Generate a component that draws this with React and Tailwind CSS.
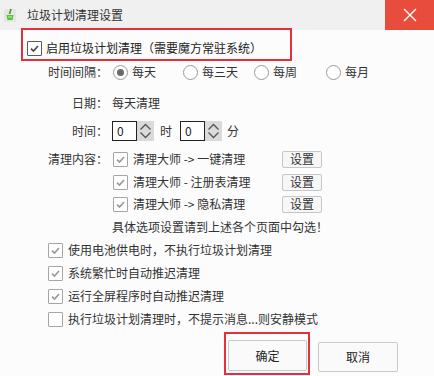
import React from "react";

const font = { fontFamily: '"Noto Sans CJK SC", "Noto Sans", sans-serif' };

function Check({ checked = true, dark = false }) {
  return (
    <div
      className={`w-[15px] h-[15px] shrink-0 border-[1.5px] rounded-[1px] bg-white flex items-center justify-center ${
        dark ? "border-[#5a5a5a]" : "border-[#a5a5a5]"
      }`}
    >
      {checked && (
        <svg width="11" height="11" viewBox="0 0 11 11">
          <path
            d="M2 5.6 L4.5 8 L9 3"
            fill="none"
            stroke={dark ? "#4a4a4a" : "#9a9a9a"}
            strokeWidth="1.7"
          />
        </svg>
      )}
    </div>
  );
}

function Radio({ checked }) {
  return (
    <div className="w-[15px] h-[15px] shrink-0 rounded-full border-[1.5px] border-[#9a9a9a] bg-white flex items-center justify-center">
      {checked && <div className="w-[7px] h-[7px] rounded-full bg-[#6a6a6a]" />}
    </div>
  );
}

function Spin() {
  return (
    <div className="w-[17px] h-[20px] bg-[#dadada] flex flex-col items-center justify-center">
      <svg width="13" height="18" viewBox="0 0 13 18">
        <path d="M1.5 7.5 L6.5 2.5 L11.5 7.5" fill="none" stroke="#555" strokeWidth="1.3" />
        <path d="M1.5 10.5 L6.5 15.5 L11.5 10.5" fill="none" stroke="#555" strokeWidth="1.3" />
      </svg>
    </div>
  );
}

function NumBox() {
  return (
    <div className="w-[25px] h-[20px] border border-[#222] bg-white flex items-center pl-[4px] text-[12px] text-[#222]">
      0
    </div>
  );
}

function SetBtn() {
  return (
    <div className="w-[40px] h-[17px] border border-[#c6c6c6] rounded-[2px] bg-[#f7f7f7] flex items-center justify-center text-[12px] text-[#333]">
      设置
    </div>
  );
}

export default function App() {
  return (
    <div
      className="w-[434px] h-[376px] bg-[#fcfcfc] overflow-hidden text-[#333] text-[12px] leading-none"
      style={font}
    >
      {/* title bar */}
      <div className="h-[30px] bg-[#f0f0f0] flex items-center relative">
        <div className="ml-[4px] w-[12px] h-[14px] flex items-center justify-center">
          <svg width="12" height="14" viewBox="0 0 12 14">
            <rect x="0" y="1" width="12" height="13" rx="1" fill="#e4e4e4" />
            <path d="M7 1 L5.5 6" stroke="#3f9b2c" strokeWidth="1.6" />
            <path d="M2.5 7 L9.5 7 L8.5 12 L3.5 12 Z" fill="#5cbf3a" />
            <path d="M4 9 L8 9" stroke="#e9f7d8" strokeWidth="0.8" />
          </svg>
        </div>
        <span className="ml-[11px] text-[12px] text-[#333]">垃圾计划清理设置</span>
        <div className="ml-auto w-[49px] h-[30px] bg-[#e84c3d] flex items-center justify-center">
          <svg width="14" height="14" viewBox="0 0 14 14">
            <path d="M1 1 L13 13 M13 1 L1 13" stroke="#fff" strokeWidth="1.4" />
          </svg>
        </div>
      </div>

      {/* highlighted enable row */}
      <div className="relative -mt-[2px] ml-[21px] w-[271px] h-[33px] border-2 border-[#e3303a] flex items-center pl-[4px] pt-[7px]">
        <Check dark />
        <span className="ml-[4px] text-[12px] text-[#222]">启用垃圾计划清理（需要魔方常驻系统）</span>
      </div>

      {/* interval */}
      <div className="h-[22px] flex items-center">
        <div className="w-[108px] text-right">时间间隔：</div>
        <div className="ml-[5px] w-[70px] flex items-center">
          <Radio checked />
          <span className="ml-[4px]">每天</span>
        </div>
        <div className="w-[71px] flex items-center">
          <Radio />
          <span className="ml-[4px]">每三天</span>
        </div>
        <div className="w-[72px] flex items-center">
          <Radio />
          <span className="ml-[4px]">每周</span>
        </div>
        <div className="flex items-center">
          <Radio />
          <span className="ml-[4px]">每月</span>
        </div>
      </div>

      {/* date */}
      <div className="mt-[9px] h-[22px] flex items-center">
        <div className="w-[108px] text-right">日期：</div>
        <div className="ml-[4px]">每天清理</div>
      </div>

      {/* time */}
      <div className="mt-[6px] h-[22px] flex items-center">
        <div className="w-[108px] text-right">时间：</div>
        <div className="ml-[4px] flex items-center">
          <NumBox />
          <Spin />
          <span className="ml-[6px]">时</span>
          <div className="ml-[8px] flex items-center">
            <NumBox />
            <Spin />
          </div>
          <span className="ml-[5px]">分</span>
        </div>
      </div>

      {/* content */}
      <div className="mt-[6px] h-[22px] flex items-center">
        <div className="w-[108px] text-right">清理内容：</div>
        <div className="ml-[5px] flex items-center">
          <Check />
          <span className="ml-[5px] w-[149px]">清理大师 -&gt; 一键清理</span>
          <SetBtn />
        </div>
      </div>
      <div className="mt-[1px] h-[22px] flex items-center">
        <div className="ml-[113px] flex items-center">
          <Check />
          <span className="ml-[5px] w-[149px]">清理大师 - 注册表清理</span>
          <SetBtn />
        </div>
      </div>
      <div className="h-[22px] flex items-center">
        <div className="ml-[113px] flex items-center">
          <Check />
          <span className="ml-[5px] w-[149px]">清理大师 -&gt; 隐私清理</span>
          <SetBtn />
        </div>
      </div>
      <div className="mt-[1px] h-[22px] flex items-center">
        <div className="ml-[112px]">具体选项设置请到上述各个页面中勾选！</div>
      </div>

      {/* options */}
      <div className="mt-[1px] h-[22px] flex items-center pl-[48px]">
        <Check />
        <span className="ml-[5px]">使用电池供电时，不执行垃圾计划清理</span>
      </div>
      <div className="mt-[1px] h-[22px] flex items-center pl-[48px]">
        <Check />
        <span className="ml-[5px]">系统繁忙时自动推迟清理</span>
      </div>
      <div className="mt-[1px] h-[22px] flex items-center pl-[48px]">
        <Check />
        <span className="ml-[5px]">运行全屏程序时自动推迟清理</span>
      </div>
      <div className="mt-[1px] h-[22px] flex items-center pl-[48px]">
        <Check checked={false} />
        <span className="ml-[5px] whitespace-nowrap">执行垃圾计划清理时，不提示消息...则安静模式</span>
      </div>

      {/* buttons */}
      <div className="mt-[2px] flex items-start">
        <div className="ml-[224px] w-[86px] h-[43px] border-2 border-[#e3303a] pl-[2px] pt-[6px]">
          <div className="w-[79px] h-[31px] border border-[#c9c9c9] rounded-[2px] bg-[#fafafa] flex items-center justify-center text-[12px] text-[#222]">
            确定
          </div>
        </div>
        <div className="ml-[8px] mt-[10px] w-[80px] h-[30px] border border-[#c9c9c9] rounded-[2px] bg-[#fafafa] flex items-center justify-center text-[12px] text-[#222]">
          取消
        </div>
      </div>
    </div>
  );
}
